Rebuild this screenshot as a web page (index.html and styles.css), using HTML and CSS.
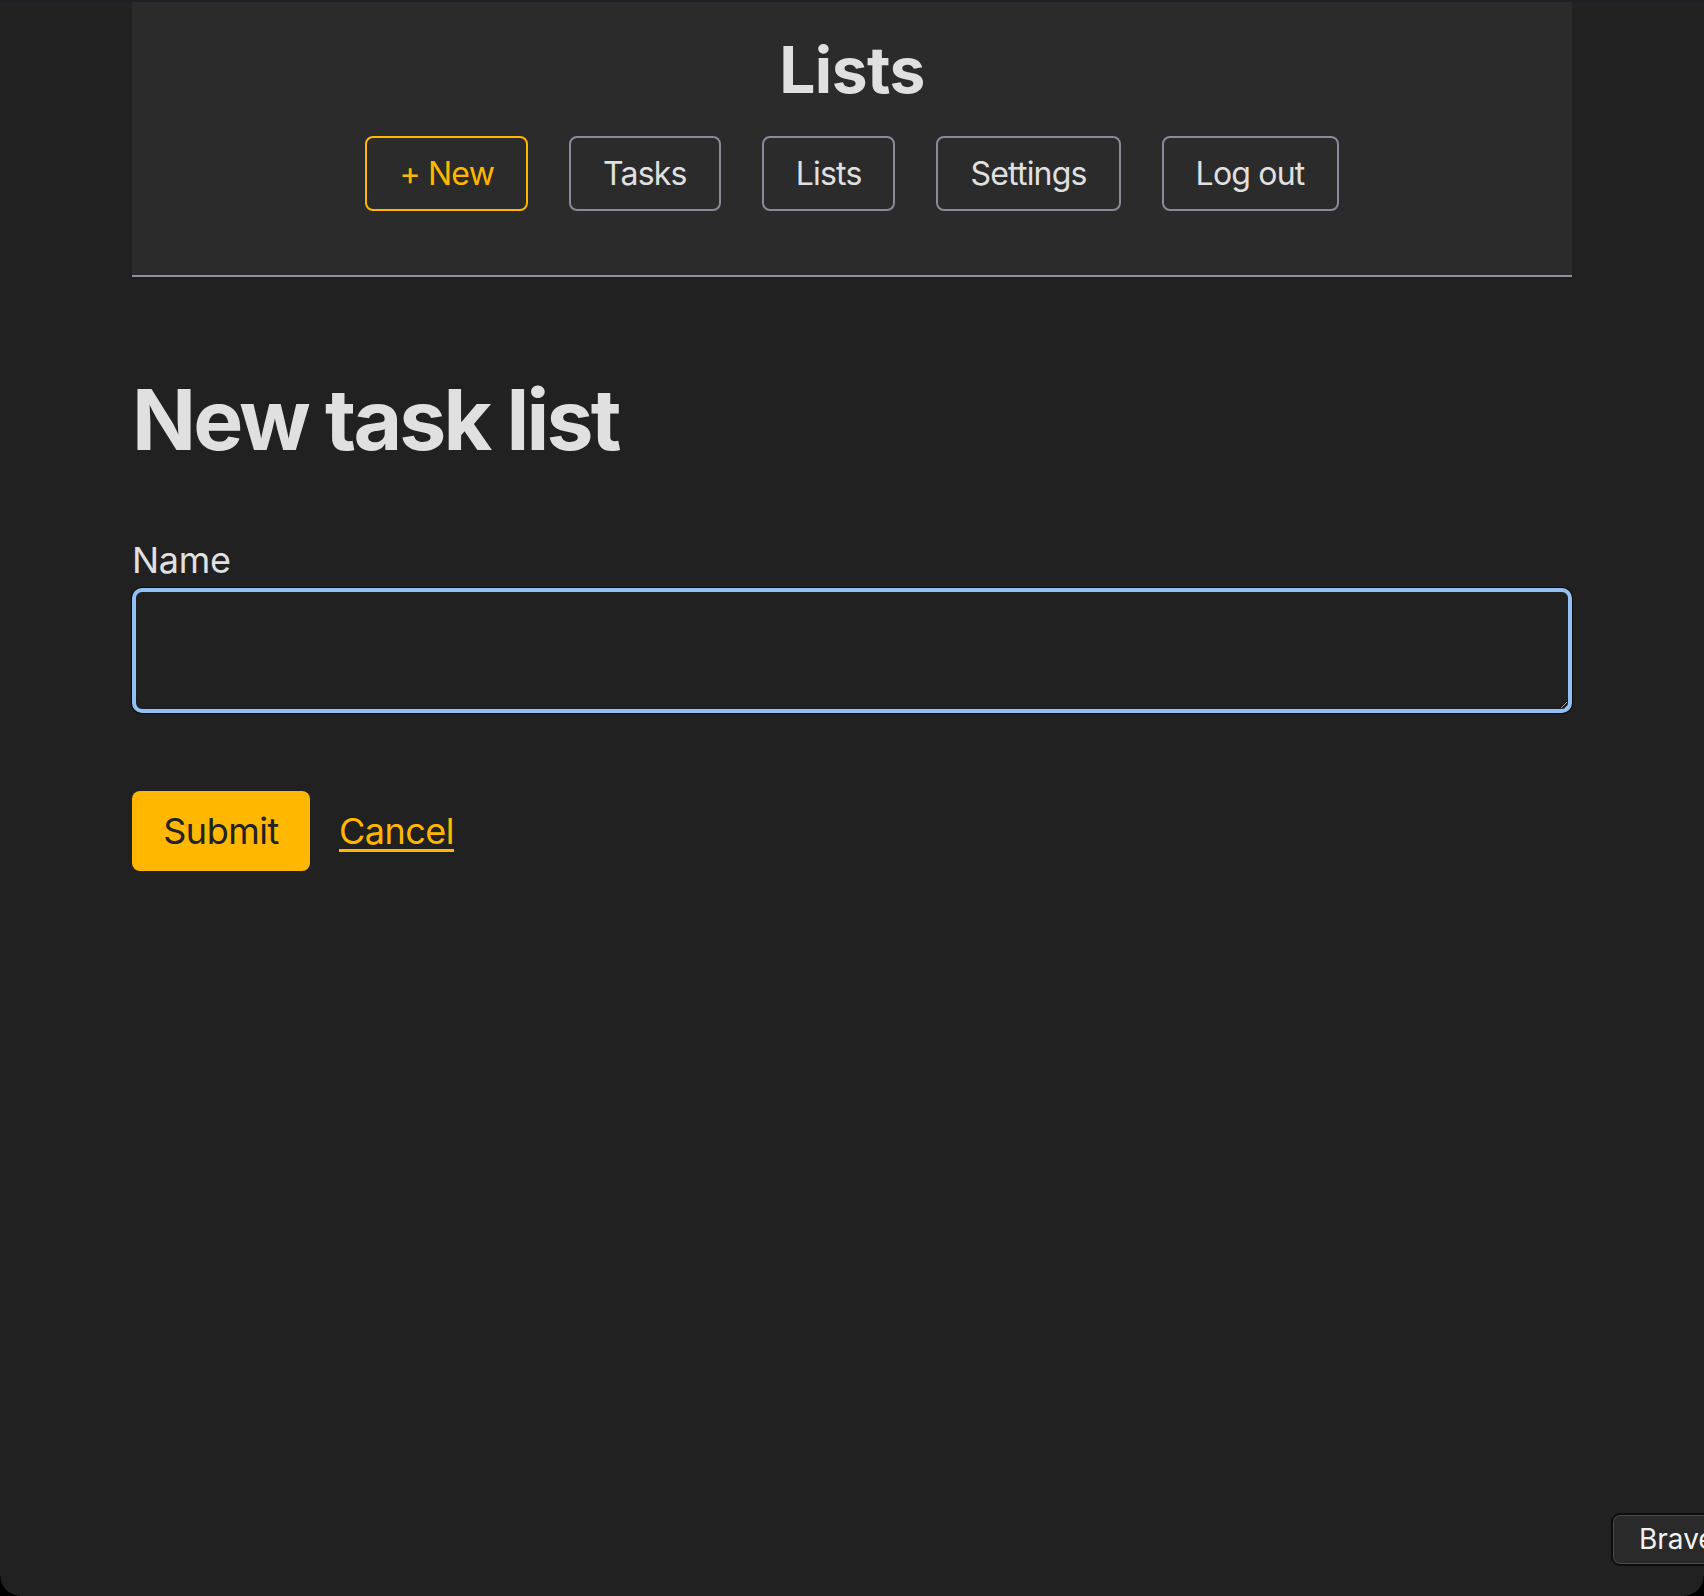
FILE: index.html
```html
<!DOCTYPE html>
<html lang="en">
<head>
<meta charset="utf-8">
<title>New task list</title>
<link rel="stylesheet" href="styles.css">
</head>
<body>
<div class="topbar"></div>
<div class="container">
  <header class="site-header">
    <h1 class="site-title">Lists</h1>
    <nav class="nav">
      <a class="nav-btn nav-btn--accent" href="#">+ New</a>
      <a class="nav-btn" href="#">Tasks</a>
      <a class="nav-btn" href="#">Lists</a>
      <a class="nav-btn" href="#">Settings</a>
      <a class="nav-btn" href="#">Log out</a>
    </nav>
  </header>
  <main class="main">
    <h2 class="page-title">New task list</h2>
    <form class="form">
      <label class="label" for="name">Name</label>
      <textarea class="field" id="name"></textarea>
      <div class="actions">
        <button class="submit" type="button">Submit</button>
        <a class="cancel" href="#">Cancel</a>
      </div>
    </form>
  </main>
</div>
<div class="brave-badge">Brave</div>
<div class="corner corner--left"></div>
<div class="corner corner--right"></div>
</body>
</html>
```

FILE: styles.css
```css
html, body {
  margin: 0;
  padding: 0;
}
body {
  background: #212121;
  color: #e0e0e0;
  font-family: Inter, "Noto Sans", "Liberation Sans", sans-serif;
  min-height: 1596px;
  overflow: hidden;
}
.topbar {
  height: 2px;
  background: #1c2024;
}
.container {
  width: 1440px;
  margin: 0 auto;
}
.site-header {
  background: #2b2b2b;
  padding: 29px 0 64px;
  border-bottom: 2px solid #8e8e9c;
  display: flex;
  flex-direction: column;
  align-items: center;
}
.site-title {
  margin: 0;
  font-size: 64px;
  line-height: 77px;
  font-weight: 700;
  color: #e0e0e0;
  letter-spacing: -0.5px;
}
.nav {
  margin-top: 28px;
  display: flex;
  gap: 41px;
}
.nav-btn {
  display: block;
  font-size: 32px;
  line-height: 39px;
  letter-spacing: -0.8px;
  padding: 16px 32px;
  border: 2px solid #8a8a9a;
  border-radius: 8px;
  color: #e0e0e0;
  text-decoration: none;
}
.nav-btn--accent {
  border-color: #ffb700;
  color: #ffb700;
}
.main {
  padding-top: 92px;
}
.page-title {
  margin: 0;
  font-size: 84px;
  line-height: 101px;
  font-weight: 700;
  letter-spacing: -2.8px;
  color: #e0e0e0;
}
.form {
  margin-top: 70px;
  display: flex;
  flex-direction: column;
}
.label {
  font-size: 36px;
  line-height: 41px;
  letter-spacing: -0.3px;
  color: #e0e0e0;
}
.field {
  margin-top: 7px;
  box-sizing: border-box;
  width: 1440px;
  height: 125px;
  background: #212121;
  border: 4px solid #93c0f4;
  border-radius: 10px;
  box-shadow: 0 0 0 1px #0c0c0c;
  outline: none;
  color: #e0e0e0;
  font-family: inherit;
  font-size: 32px;
}
.actions {
  margin-top: 78px;
  display: flex;
  align-items: center;
  gap: 29px;
}
.submit {
  height: 80px;
  width: 178px;
  padding: 0;
  border: 0;
  border-radius: 8px;
  background: #ffb700;
  color: #222222;
  font-family: inherit;
  font-size: 36px;
  letter-spacing: -0.5px;
}
.cancel {
  color: #ffb700;
  font-size: 36px;
  letter-spacing: -0.5px;
  text-decoration: underline;
  text-decoration-thickness: 3px;
  text-underline-offset: 5px;
}
.brave-badge {
  position: fixed;
  left: 1611px;
  top: 1513px;
  width: 140px;
  height: 49px;
  box-sizing: content-box;
  padding-left: 26px;
  background: #2a2a2a;
  border: 2px solid #0d0d0d;
  box-shadow: inset 0 0 0 1px #4a4a4a;
  border-radius: 9px;
  color: #f2f2f2;
  font-size: 28px;
  line-height: 49px;
}
.corner {
  position: fixed;
  bottom: 0;
  width: 20px;
  height: 20px;
}
.corner--left {
  left: 0;
  background: radial-gradient(circle at 100% 0, transparent 19px, #000 20px);
}
.corner--right {
  right: 0;
  background: radial-gradient(circle at 0 0, transparent 19px, #000 20px);
}
```
